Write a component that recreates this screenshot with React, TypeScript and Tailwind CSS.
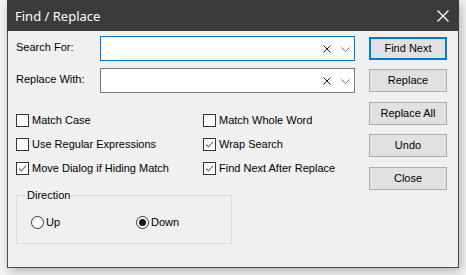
import React from "react";

const font = { fontFamily: '"Liberation Sans", Arial, sans-serif' };

function ComboInput({ focused }: { focused?: boolean }) {
  return (
    <div
      className={`relative w-[255px] h-[25px] bg-white border ${focused ? "border-[#0078d7]" : "border-[#7a7a7a]"}`}
    >
      <svg className="absolute left-[222px] top-[8px]" width="8" height="8" viewBox="0 0 8 8">
        <path d="M0.5 0.5 L7.5 7.5 M7.5 0.5 L0.5 7.5" stroke="#1a1a1a" strokeWidth="1" fill="none" />
      </svg>
      <svg className="absolute left-[240px] top-[10px]" width="9" height="5" viewBox="0 0 9 5">
        <path d="M0.5 0.5 L4.5 4.5 L8.5 0.5" stroke="#707070" strokeWidth="1" fill="none" />
      </svg>
    </div>
  );
}

function Checkbox({ label, checked }: { label: string; checked?: boolean }) {
  return (
    <div className="flex items-center h-[24px]">
      <div className="relative w-[13px] h-[13px] border border-[#333333] bg-white">
        {checked && (
          <svg className="absolute left-[1px] top-[1px]" width="9" height="9" viewBox="0 0 9 9">
            <path d="M1 4.5 L3.5 7 L8 1.5" stroke="#6a6a6a" strokeWidth="1.1" fill="none" />
          </svg>
        )}
      </div>
      <span className="ml-[3px] text-[11px] text-black leading-none">{label}</span>
    </div>
  );
}

function Radio({ label, checked }: { label: string; checked?: boolean }) {
  return (
    <div className="flex items-center">
      <div className="w-[13px] h-[13px] rounded-full border border-[#333333] bg-white flex items-center justify-center">
        {checked && <div className="w-[7px] h-[7px] rounded-full bg-[#1a1a1a]" />}
      </div>
      <span className="ml-[2px] text-[11px] text-black leading-none">{label}</span>
    </div>
  );
}

function Btn({ label, primary, className }: { label: string; primary?: boolean; className?: string }) {
  return (
    <div
      className={`w-[78px] h-[23px] bg-[#e1e1e1] flex items-center justify-center text-[11px] text-black ${
        primary ? "border-2 border-[#0078d7]" : "border border-[#adadad]"
      } ${className ?? ""}`}
    >
      {label}
    </div>
  );
}

export default function App() {
  return (
    <div className="w-[466px] h-[275px] bg-[#f4f4f4]" style={font}>
      <div className="ml-[7px] w-[452px] h-[268px] flex flex-col border-x border-b border-[#4a4a4a] bg-[#f0f0f0] shadow-[2px_3px_10px_rgba(0,0,0,0.28)]">
        <div className="h-[31px] bg-[#3b3b3b] flex items-center justify-between pl-[8px] pr-[9px] -mx-px">
          <span
            className="text-white text-[13px] leading-none mt-[1px]"
            style={{ fontFamily: '"Noto Sans", "Open Sans", sans-serif' }}
          >
            Find / Replace
          </span>
          <svg width="12" height="12" viewBox="0 0 12 12" className="mr-[1px]">
            <path d="M0.5 0.5 L11.5 11.5 M11.5 0.5 L0.5 11.5" stroke="#ffffff" strokeWidth="1.3" fill="none" />
          </svg>
        </div>
        <div className="flex-1 flex">
          <div className="flex-1 pl-[8px] pt-[5px] flex flex-col">
            <div className="flex items-center h-[25px]">
              <span className="w-[84px] text-[11px] -mt-[3px]">Search For:</span>
              <ComboInput focused />
            </div>
            <div className="flex items-center h-[25px] mt-[7px]">
              <span className="w-[84px] text-[11px] -mt-[3px]">Replace With:</span>
              <ComboInput />
            </div>
            <div className="mt-[15px] grid grid-cols-[187px_1fr]">
              <Checkbox label="Match Case" />
              <Checkbox label="Match Whole Word" />
              <Checkbox label="Use Regular Expressions" />
              <Checkbox label="Wrap Search" checked />
              <Checkbox label="Move Dialog if Hiding Match" checked />
              <Checkbox label="Find Next After Replace" checked />
            </div>
            <div className="relative mt-[15px] w-[216px] h-[49px] border border-[#dcdcdc]">
              <span className="absolute left-[9px] -top-[8px] px-[1px] bg-[#f0f0f0] text-[11px] leading-[14px]">
                Direction
              </span>
              <div className="flex pt-[20px] pl-[14px]">
                <div className="w-[105px]">
                  <Radio label="Up" />
                </div>
                <Radio label="Down" checked />
              </div>
            </div>
          </div>
          <div className="w-[78px] mr-[11px] flex flex-col">
            <Btn label="Find Next" primary className="mt-[6px]" />
            <Btn label="Replace" className="mt-[9px]" />
            <Btn label="Replace All" className="mt-[10px]" />
            <Btn label="Undo" className="mt-[9px]" />
            <Btn label="Close" className="mt-[10px]" />
          </div>
        </div>
      </div>
    </div>
  );
}
